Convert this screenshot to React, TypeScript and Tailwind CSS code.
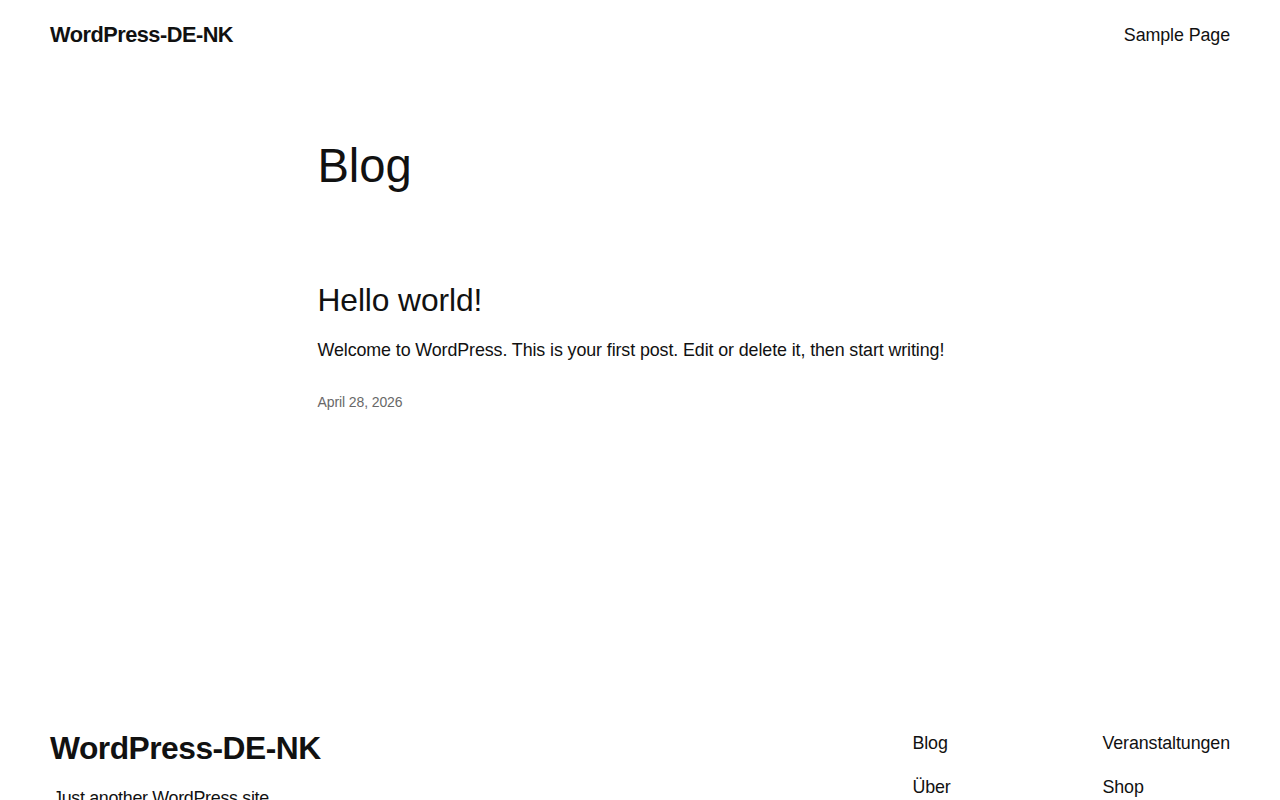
import React from "react";

export default function App() {
  return (
    <div className="min-h-[800px] bg-white text-[#111111] font-['Liberation_Sans',Arial,sans-serif] tracking-[-0.1px]">
      <header className="flex h-[70px] items-center justify-between px-[50px]">
        <a className="text-[21.76px] font-bold leading-[1.2] tracking-[-0.5px]">WordPress-DE-NK</a>
        <nav className="text-[17.88px] leading-[1.5]">
          <a>Sample Page</a>
        </nav>
      </header>

      <main className="mx-auto w-[645px] pt-[68px]">
        <h1 className="text-[47.2px] leading-[1.2]">Blog</h1>
        <article className="mt-[86px]">
          <h2 className="text-[31.76px] leading-[1.2]">Hello world!</h2>
          <p className="mt-[18px] text-[17.88px] leading-[1.5]">
            Welcome to WordPress. This is your first post. Edit or delete it, then start writing!
          </p>
          <div className="mt-[28px] text-[14px] leading-[1.5] text-[#686868]">April 28, 2026</div>
        </article>
      </main>

      <footer className="mt-[316px] flex justify-between px-[50px]">
        <div className="flex flex-col">
          <a className="text-[31.76px] font-bold leading-[1.2] tracking-[-0.5px]">WordPress-DE-NK</a>
          <p className="mt-[18px] pl-[3px] text-[17.88px] leading-[1.5] tracking-[-0.3px]">Just another WordPress site</p>
        </div>
        <div className="flex pt-[1px] text-[17.88px] leading-[1.5]">
          <div className="flex w-[190px] flex-col gap-[18px]">
            <a>Blog</a>
            <a>Über</a>
          </div>
          <div className="flex flex-col gap-[18px]">
            <a>Veranstaltungen</a>
            <a>Shop</a>
          </div>
        </div>
      </footer>
    </div>
  );
}
